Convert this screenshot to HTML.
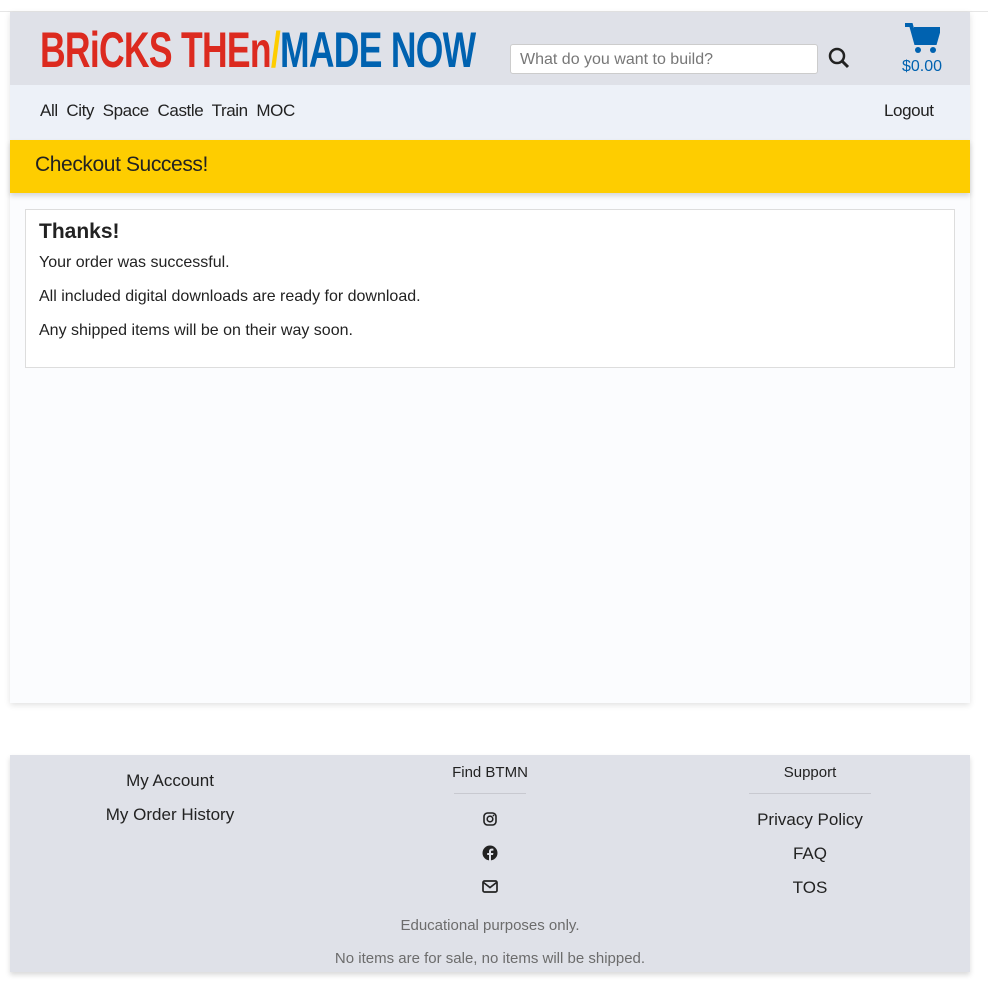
<!DOCTYPE html>
<html><head><style>
body{margin:0;width:988px;height:990px;background:#fff;font-family:"Liberation Sans Narrow","Liberation Sans",sans-serif;color:#222;position:relative;overflow:hidden}
.abs{position:absolute}
.topline{left:0;top:11px;width:988px;height:1px;background:#e6e6e6}
.wrap{left:10px;top:12px;width:960px;height:691px;background:#fbfcfe;box-shadow:0 2px 6px rgba(0,0,0,.12)}
.hdr{left:10px;top:12px;width:960px;height:73px;background:#dfe1e8}
.nav{left:10px;top:85px;width:960px;height:55px;background:#edf1f8}
.yel{left:10px;top:140px;width:960px;height:53px;background:#fecd00;box-shadow:0 3px 5px rgba(0,0,0,.15)}
.logo{left:40px;top:22px;font-size:50px;font-weight:bold;letter-spacing:-1px;transform:scaleX(.71);transform-origin:left;white-space:nowrap;line-height:56px}
.search{left:510px;top:44px;width:308px;height:30px;background:#fff;border:1px solid #ccc;border-radius:3px;font-size:16px;color:#777;line-height:30px;padding-left:9px;box-sizing:border-box}
.nv{top:101px;font-size:17px;letter-spacing:-.4px}
.card{left:25px;top:209px;width:928px;height:157px;border:1px solid #ddd;background:#fff}
.foot{left:10px;top:755px;width:960px;height:217px;background:#dfe1e8;box-shadow:0 3px 5px rgba(0,0,0,.15)}
.c{text-align:center;font-size:17px;width:300px}
</style></head><body>
<div class="abs topline"></div>
<div class="abs wrap"></div>
<div class="abs hdr"></div>
<div class="abs logo"><span style="color:#dc2a1f">BRiCKS THEn</span><span style="color:#fecd00">/</span><span style="color:#0062b0">MADE NOW</span></div>
<div class="abs search">What do you want to build?</div>
<svg class="abs" style="left:828px;top:47px" width="22" height="22" viewBox="0 0 22 22"><circle cx="9" cy="9" r="7" fill="none" stroke="#222" stroke-width="2.5"/><line x1="14" y1="14" x2="20" y2="20" stroke="#222" stroke-width="3"/></svg>
<svg class="abs" style="left:904px;top:22px" width="36" height="32" viewBox="0 0 36 32"><path d="M1 3h6l5 18h19l4-14H10" fill="none" stroke="#0062b0" stroke-width="4"/><path d="M10 7h25l-4 14H12z" fill="#0062b0"/><circle cx="14" cy="28" r="3" fill="#0062b0"/><circle cx="29" cy="28" r="3" fill="#0062b0"/></svg>
<div class="abs" style="left:902px;top:58px;font-size:16px;color:#0062b0">$0.00</div>
<div class="abs nav"></div>
<div class="abs nv" style="left:40px">All&nbsp; City&nbsp; Space&nbsp; Castle&nbsp; Train&nbsp; MOC</div>
<div class="abs nv" style="left:884px">Logout</div>
<div class="abs yel"></div>
<div class="abs" style="left:35px;top:153px;font-size:21px;color:#222;letter-spacing:-.4px">Checkout Success!</div>
<div class="abs card">
<div style="position:absolute;left:13px;top:10px;font-size:21px;font-weight:bold">Thanks!</div>
<div style="position:absolute;left:13px;top:36px;font-size:16px;line-height:34px">Your order was successful.<br>All included digital downloads are ready for download.<br>Any shipped items will be on their way soon.</div>
</div>
<div class="abs foot"></div>
<div class="abs c" style="left:20px;top:771px">My Account</div>
<div class="abs c" style="left:20px;top:805px">My Order History</div>
<div class="abs c" style="left:340px;top:764px;font-size:15px">Find BTMN</div>
<div class="abs" style="left:454px;top:793px;width:72px;height:1px;background:#c8c9d0"></div>
<div class="abs c" style="left:660px;top:764px;font-size:15px">Support</div>
<div class="abs" style="left:749px;top:793px;width:122px;height:1px;background:#c8c9d0"></div>
<svg class="abs" style="left:483px;top:812px" width="14" height="14" viewBox="0 0 14 14"><rect x="1" y="1" width="12" height="12" rx="3.5" fill="none" stroke="#222" stroke-width="1.6"/><circle cx="7" cy="7" r="2.8" fill="none" stroke="#222" stroke-width="1.6"/><circle cx="10.5" cy="3.5" r=".9" fill="#222"/></svg>
<svg class="abs" style="left:482px;top:845px" width="16" height="16" viewBox="0 0 16 16"><circle cx="8" cy="8" r="7.5" fill="#222"/><path d="M9 16V10h2l.4-2H9V6.6c0-.6.3-1 1-1h1.4V3.8C11 3.7 10.4 3.6 9.8 3.6 8.2 3.6 7 4.6 7 6.4V8H5.2v2H7v6z" fill="#dfe1e8"/></svg>
<svg class="abs" style="left:482px;top:880px" width="16" height="13" viewBox="0 0 16 13"><rect x="1" y="1" width="14" height="11" rx="1.5" fill="none" stroke="#222" stroke-width="1.7"/><path d="M1.5 2.5L8 7.5l6.5-5" fill="none" stroke="#222" stroke-width="1.7"/></svg>
<div class="abs c" style="left:660px;top:810px">Privacy Policy</div>
<div class="abs c" style="left:660px;top:844px">FAQ</div>
<div class="abs c" style="left:660px;top:878px">TOS</div>
<div class="abs" style="left:10px;width:960px;text-align:center;top:917px;font-size:15px;color:#6c6c6c">Educational purposes only.</div>
<div class="abs" style="left:10px;width:960px;text-align:center;top:950px;font-size:15px;color:#6c6c6c">No items are for sale, no items will be shipped.</div>
</body></html>
